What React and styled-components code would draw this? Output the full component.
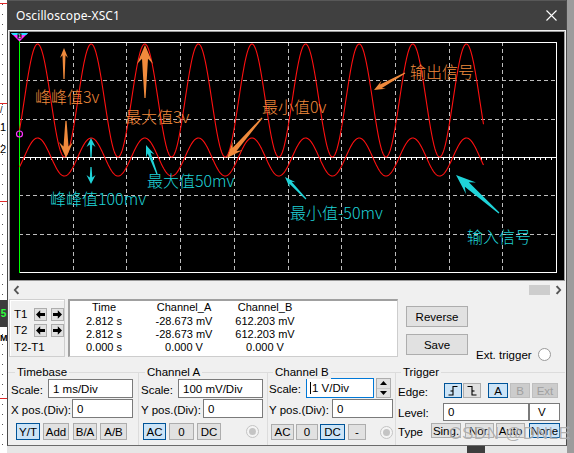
import React from 'react';
import styled, { createGlobalStyle } from 'styled-components';

const GlobalStyle = createGlobalStyle`
  html, body { margin: 0; padding: 0; }
  body {
    width: 574px; height: 453px; overflow: hidden;
    background: #ececec;
    font-family: "Liberation Sans", Arial, sans-serif;
    color: #000;
  }
`;

const ORANGE = '#f08a3c';
const CYAN = '#1fd3d8';

const Desktop = styled.div`
  display: flex;
  width: 574px;
  height: 453px;
  overflow: hidden;
`;

const LeftStrip = styled.div`
  position: relative;
  width: 7px;
  flex: none;
  background:
    repeating-linear-gradient(to bottom, #555 0 1px, transparent 1px 10px) 2px 4px / 1px 100% no-repeat,
    #fff;
  overflow: hidden;
`;

const StripLine = styled.div`
  position: absolute;
  left: 0;
  top: ${p => p.$y}px;
  width: 7px;
  height: 1px;
  background: #e02a2a;
`;

const StripBlock = styled.div`
  position: absolute;
  left: 0;
  top: 300px;
  width: 7px;
  height: 27px;
  background: #3c3c3c;
  color: #2cff3a;
  font-size: 10px;
  line-height: 27px;
  text-align: center;
  font-weight: bold;
`;

const StripChar = styled.span`
  position: absolute;
  left: ${p => p.$x}px;
  top: ${p => p.$y}px;
  font-size: ${p => p.$s || 10}px;
  line-height: 1;
  color: ${p => p.$c || '#000'};
  font-weight: ${p => p.$b ? 'bold' : 'normal'};
`;

const RightStrip = styled.div`
  width: 7px;
  flex: none;
  background: #9c9c9c;
`;

const MidColumn = styled.div`
  width: 560px;
  flex: none;
  display: flex;
  flex-direction: column;
`;

const BelowWindow = styled.div`
  position: relative;
  flex: 1;
  background: #e6e6e6;
`;

const BelowBlock = styled.div`
  position: absolute;
  left: 460px;
  top: 0;
  width: 18px;
  height: 8px;
  background: #3e3e3e;
`;

const Window = styled.div`
  position: relative;
  box-sizing: border-box;
  width: 560px;
  height: 446px;
  display: flex;
  flex-direction: column;
  background: #f0f0f0;
  border-left: 1px solid #4a4a4a;
  border-right: 1px solid #4a4a4a;
  border-bottom: 1px solid #6a6a6a;
`;

const TitleBar = styled.div`
  height: 30px;
  flex: none;
  box-sizing: border-box;
  border-top: 1px solid #585858;
  background: #404040;
  display: flex;
  align-items: center;
  justify-content: space-between;
  padding: 0 9px 0 8px;
  color: #fff;
  font-family: "Noto Sans", "Open Sans", sans-serif;
  font-size: 12px;
`;

const TitleText = styled.span`
  letter-spacing: 0.1px;
`;

const Screen = styled.div`
  margin: 1px 1px 0 1px;
  height: 248px;
  border: 1px solid #9a9a9a;
  background: #000;
  flex: none;
  overflow: hidden;
  svg { display: block; }
`;

const ScrollBar = styled.div`
  height: 17px;
  flex: none;
  display: flex;
  align-items: center;
`;

const ScrollArrow = styled.div`
  width: ${p => p.$w}px;
  height: 17px;
  display: flex;
  align-items: center;
  justify-content: center;
  flex: none;
  color: #505050;
  font-family: "DejaVu Sans", sans-serif;
  font-size: 13px;
  font-weight: bold;
  line-height: 17px;
`;

const ScrollTrack = styled.div`
  flex: 1;
  height: 17px;
  display: flex;
  align-items: center;
  justify-content: flex-end;
`;

const ScrollThumb = styled.div`
  width: 21px;
  height: 10px;
  background: #cdcdcd;
`;

const CursorSection = styled.div`
  display: flex;
  height: 58px;
  margin-top: 1px;
  padding-left: 1px;
  flex: none;
  font-size: 11px;
`;

const CursorBox = styled.div`
  box-sizing: border-box;
  width: 56px;
  height: 58px;
  border: 1px solid #cfcfcf;
  box-shadow: inset 1px 1px 0 #fff;
  padding: 8px 0 0 4px;
  display: flex;
  flex-direction: column;
  gap: 3px;
`;

const CursorRow = styled.div`
  display: flex;
  align-items: center;
  height: 13px;
  line-height: 13px;
`;

const CursorLabel = styled.span`
  width: ${p => p.$w || 20}px;
  flex: none;
  font-size: 11.5px;
  white-space: nowrap;
  padding-top: ${p => p.$dy || 0}px;
`;

const ArrowBtn = styled.div`
  box-sizing: border-box;
  width: 13px;
  height: 13px;
  margin-left: ${p => p.$ml || 0}px;
  border: 1px solid #adadad;
  background: #e1e1e1;
  display: flex;
  align-items: center;
  justify-content: center;
  flex: none;
`;

const Table = styled.div`
  box-sizing: border-box;
  width: 330px;
  height: 58px;
  margin-left: 3px;
  background: #fff;
  border: 1px solid #cdcdcd;
  border-top: 2px solid #a0a0a0;
  border-left: 2px solid #a0a0a0;
  display: grid;
  grid-template-columns: 68px 92px 70px;
  grid-auto-rows: 13px;
  align-content: start;
  line-height: 13px;
`;

const Cell = styled.div`
  text-align: center;
  white-space: nowrap;
  padding-top: ${p => p.$head ? 0 : 1}px;
`;

const SideButtons = styled.div`
  display: flex;
  flex-direction: column;
  gap: 7px;
  padding-top: 7px;
  margin-left: 8px;
`;

const PushButton = styled.div`
  box-sizing: border-box;
  width: 62px;
  height: 21px;
  border: 1px solid #adadad;
  background: #e1e1e1;
  display: flex;
  align-items: center;
  justify-content: center;
  font-size: 11.5px;
`;

const ExtRow = styled.div`
  display: flex;
  align-items: center;
  height: 13px;
  margin-top: 49px;
  margin-left: 8px;
  font-size: 11.5px;
  white-space: nowrap;
  gap: 6px;
`;

const Controls = styled.div`
  display: flex;
  margin-top: 15px;
  flex: 1;
  font-size: 11px;
`;

const Group = styled.div`
  position: relative;
  box-sizing: border-box;
  width: ${p => p.$w}px;
  flex: none;
  border-top: 1px solid #dcdcdc;
  border-left: ${p => p.$first ? 'none' : '1px solid #dcdcdc'};
  padding-left: ${p => p.$pl}px;
`;

const Legend = styled.span`
  position: absolute;
  top: -8px;
  left: ${p => p.$x}px;
  padding: 0 2px;
  background: #f0f0f0;
  font-size: 11.5px;
  line-height: 14px;
  white-space: nowrap;
`;

const Row = styled.div`
  display: flex;
  align-items: center;
  height: ${p => p.$h}px;
  margin-top: ${p => p.$mt}px;
`;

const Label = styled.span`
  width: ${p => p.$w}px;
  flex: none;
  white-space: nowrap;
  font-size: 11.5px;
  padding-top: 2px;
`;

const Input = styled.div`
  box-sizing: border-box;
  width: ${p => p.$w}px;
  height: 100%;
  flex: none;
  border: 1px solid ${p => p.$focus ? '#0078d7' : '#7a7a7a'};
  background: #fff;
  padding-left: ${p => p.$pl ?? 4}px;
  display: flex;
  align-items: center;
  font-size: 11.5px;
  white-space: nowrap;
`;

const Caret = styled.span`
  display: inline-block;
  width: 1px;
  height: 12px;
  background: #000;
  margin-right: 1px;
`;

const Btn = styled.div`
  box-sizing: border-box;
  width: ${p => p.$w}px;
  height: 100%;
  margin-left: ${p => p.$ml || 0}px;
  flex: none;
  display: flex;
  align-items: center;
  justify-content: center;
  font-size: 11.5px;
  border: 1px solid ${p => p.$active ? '#005499' : p.$disabled ? '#bfbfbf' : '#adadad'};
  background: ${p => p.$active ? '#cce4f7' : p.$disabled ? '#cccccc' : '#e1e1e1'};
  color: ${p => p.$disabled ? '#a0a0a0' : '#000'};
`;

const Spinner = styled.div`
  box-sizing: border-box;
  width: 15px;
  height: 20px;
  margin-left: 2px;
  flex: none;
  border: 1px solid #adadad;
  background: #e1e1e1;
  display: flex;
  flex-direction: column;
`;

const SpinHalf = styled.div`
  flex: 1;
  display: flex;
  align-items: center;
  justify-content: center;
  border-top: ${p => p.$bottom ? '1px solid #c8c8c8' : 'none'};
`;

const Radio = styled.div`
  box-sizing: border-box;
  width: 13px;
  height: 13px;
  margin-left: ${p => p.$ml || 0}px;
  flex: none;
  border-radius: 50%;
  border: 1px solid ${p => p.$disabled ? '#c4c4c4' : '#9a9a9a'};
  background: ${p => p.$disabled ? '#f4f4f4' : '#fff'};
  display: flex;
  align-items: center;
  justify-content: center;
  &::after {
    content: '';
    width: 7px;
    height: 7px;
    border-radius: 50%;
    background: ${p => p.$dot ? '#c4c4c4' : 'transparent'};
  }
`;

const Watermark = styled.div`
  position: absolute;
  left: 441px;
  top: 424px;
  font-size: 17px;
  letter-spacing: 0.6px;
  color: rgba(105, 105, 105, 0.5);
  text-shadow: 0 0 1px rgba(255, 255, 255, 0.9);
  white-space: nowrap;
  pointer-events: none;
`;

/* ---------- chart drawing ---------- */
const GX0 = 19, GX1 = 556, GY0 = 42, GY1 = 272;
const DX = (GX1 - GX0) / 10;
const DY = (GY1 - GY0) / 6;

function wavePath(amp, center) {
  const period = 53.6, peak = 37.6;
  let d = '';
  for (let x = 19.5; x <= 483.6; x += 0.5) {
    const y = center - amp * Math.cos((2 * Math.PI * (x - peak)) / period);
    d += (d ? 'L' : 'M') + x.toFixed(2) + ' ' + y.toFixed(2);
  }
  return d;
}

function arrowPts(x1, y1, x2, y2, headW, headL, shaft, tail = 0.6) {
  const dx = x2 - x1, dy = y2 - y1, L = Math.hypot(dx, dy);
  const ux = dx / L, uy = dy / L, nx = -uy, ny = ux;
  const bx = x2 - ux * headL, by = y2 - uy * headL;
  const jx = bx + ux * headL * 0.28, jy = by + uy * headL * 0.28;
  const p = (x, y) => `${x.toFixed(1)},${y.toFixed(1)}`;
  return [
    p(x1 + nx * tail, y1 + ny * tail),
    p(jx + nx * shaft / 2, jy + ny * shaft / 2),
    p(bx + nx * headW / 2, by + ny * headW / 2),
    p(x2, y2),
    p(bx - nx * headW / 2, by - ny * headW / 2),
    p(jx - nx * shaft / 2, jy - ny * shaft / 2),
    p(x1 - nx * tail, y1 - ny * tail),
  ].join(' ');
}

const arrows = [
  { c: ORANGE, a: [64, 79, 64, 48, 8, 10, 3] },
  { c: ORANGE, a: [66, 121, 66, 158, 14, 16, 5] },
  { c: ORANGE, a: [145, 98, 145, 45, 16, 19, 6] },
  { c: ORANGE, a: [262, 118, 227, 158, 13, 16, 5] },
  { c: ORANGE, a: [405, 73, 374, 90, 9, 11, 4] },
  { c: CYAN, a: [91, 157, 91, 138, 9, 9, 2.5] },
  { c: CYAN, a: [91, 167, 91, 184, 9, 9, 2.5] },
  { c: CYAN, a: [157, 174, 146, 145, 9, 12, 3] },
  { c: CYAN, a: [306, 199, 285, 177, 8, 11, 3] },
  { c: CYAN, a: [499, 213, 456, 175, 15, 20, 6] },
];

const notes = [
  { c: ORANGE, x: 35, y: 103, t: '峰峰值3v' },
  { c: ORANGE, x: 125, y: 123, t: '最大值3v' },
  { c: ORANGE, x: 262, y: 113, t: '最小值0v' },
  { c: ORANGE, x: 410, y: 78, t: '输出信号' },
  { c: CYAN, x: 50, y: 205, t: '峰峰值100mv' },
  { c: CYAN, x: 147, y: 187, t: '最大值50mv' },
  { c: CYAN, x: 290, y: 219, t: '最小值-50mv' },
  { c: CYAN, x: 467, y: 243, t: '输入信号' },
];

function ScopeChart() {
  const vx = [];
  for (let k = 1; k < 10; k++) vx.push(Math.round(GX0 + DX * k) + 0.5);
  const hy = [];
  for (let k = 1; k < 6; k++) if (k !== 3) hy.push(Math.round(GY0 + DY * k) + 0.5);
  const ticks = [];
  for (let k = 1; k < 100; k++) {
    const x = Math.round(GX0 + (DX / 10) * k) + 0.5;
    ticks.push(x);
  }
  const cy = 157.5;
  return (
    <svg width="554" height="248" viewBox="10 32 554 248">
      <g stroke="#bdbdbd" strokeWidth="1" strokeDasharray="4 3" shapeRendering="crispEdges">
        {vx.map(x => <line key={'v' + x} x1={x} y1={GY0} x2={x} y2={GY1} />)}
        {hy.map(y => <line key={'h' + y} x1={GX0} y1={y} x2={GX1} y2={y} />)}
      </g>
      <g stroke="#fff" strokeWidth="1" shapeRendering="crispEdges" fill="none">
        <line x1={GX0} y1={42.5} x2={GX1 + 0.5} y2={42.5} />
        <line x1={GX1 + 0.5} y1={42.5} x2={GX1 + 0.5} y2={GY1 + 0.5} />
        <line x1={GX0} y1={GY1 + 0.5} x2={GX1 + 0.5} y2={GY1 + 0.5} />
        <line x1={GX0} y1={cy} x2={GX1} y2={cy} strokeWidth="1.4" />
        {ticks.map(x => <line key={'t' + x} x1={x} y1={cy} x2={x} y2={cy + 2.5} />)}
      </g>
      <line x1="19.5" y1="36" x2="19.5" y2={GY1 + 0.5} stroke="#00ff00" strokeWidth="1" shapeRendering="crispEdges" />
      <g fill="none" stroke="#ff1010" strokeWidth="1.1">
        <path d={wavePath(56.5, 100.5)} />
        <path d={wavePath(19, 157)} />
      </g>
      <circle cx="19.5" cy="134" r="3" fill="none" stroke="#ff33ff" strokeWidth="1.2" />
      <polygon points="11,33 28,33 19.5,41.5" fill="#ff33ff" />
      <polygon points="11,33 28,33 26.2,35 12.8,35" fill="#22e0ff" />
      <rect x="17.5" y="33.5" width="4" height="5" fill="#111" />
      <text x="19.5" y="38.3" fontSize="5" fill="#fff" textAnchor="middle" fontFamily="DejaVu Sans, sans-serif">1</text>
      {arrows.map((ar, i) => (
        <polygon key={'a' + i} points={arrowPts(...ar.a)} fill={ar.c} />
      ))}
      {notes.map((n, i) => (
        <text key={'n' + i} x={n.x} y={n.y} fill={n.c} fontSize="16" fontWeight="300"
          fontFamily='"Noto Sans CJK SC", "Noto Sans", sans-serif'>{n.t}</text>
      ))}
    </svg>
  );
}

/* ---------- small icons ---------- */
const Chevron = ({ left }) => (
  <svg width="7" height="10" viewBox="0 0 7 10" style={{ display: 'block', flex: 'none' }}>
    <polygon
      points={left ? '4.6,0.5 6.2,1.8 3,5 6.2,8.2 4.6,9.5 0.6,5' : '2.4,0.5 0.8,1.8 4,5 0.8,8.2 2.4,9.5 6.4,5'}
      fill="#555" />
  </svg>
);

const CursorArrow = ({ dir }) => (
  <svg width="9" height="9" viewBox="0 0 9 9">
    <path d={dir === 'left'
      ? 'M0 4.5 L4.2 0.3 V3 H9 V6 H4.2 V8.7 Z'
      : 'M9 4.5 L4.8 0.3 V3 H0 V6 H4.8 V8.7 Z'} fill="#000" />
  </svg>
);

const CloseIcon = () => (
  <svg width="11" height="11" viewBox="0 0 11 11">
    <path d="M0.5 0.5 L10.5 10.5 M10.5 0.5 L0.5 10.5" stroke="#fff" strokeWidth="1.1" />
  </svg>
);

const SpinArrow = ({ up }) => (
  <svg width="7" height="4" viewBox="0 0 7 4">
    <path d={up ? 'M0 4 L3.5 0 L7 4 Z' : 'M0 0 L3.5 4 L7 0 Z'} fill="#000" />
  </svg>
);

const EdgeIcon = ({ rising }) => (
  <svg width="12" height="11" viewBox="0 0 12 11">
    <path d={rising ? 'M1.5 10 H6 V1.5 H10.5' : 'M1.5 1.5 H6 V10 H10.5'}
      fill="none" stroke="#000" strokeWidth="1.1" />
    <path d={rising ? 'M3.5 6 H6' : 'M6 6 H8.5'} fill="none" stroke="#000" strokeWidth="1.1" />
  </svg>
);

export default function App() {
  return (
    <>
      <GlobalStyle />
      <Desktop>
        <LeftStrip>
          <StripLine $y={3} />
          <StripLine $y={103} />
          <StripLine $y={201} />
          <StripLine $y={398} />
          <StripChar $x={0} $y={106} $s={9}>/</StripChar>
          <StripChar $x={0} $y={122} $s={11}>1</StripChar>
          <StripChar $x={0} $y={144} $s={11}>2</StripChar>
          <StripBlock>5</StripBlock>
          <StripChar $x={0} $y={334} $s={9} $b>M</StripChar>
        </LeftStrip>
        <MidColumn>
          <Window>
            <TitleBar>
              <TitleText>Oscilloscope-XSC1</TitleText>
              <CloseIcon />
            </TitleBar>
            <Screen>
              <ScopeChart />
            </Screen>
            <ScrollBar>
              <ScrollArrow $w={17}><Chevron left /></ScrollArrow>
              <ScrollTrack><ScrollThumb /></ScrollTrack>
              <ScrollArrow $w={16}><Chevron /></ScrollArrow>
            </ScrollBar>
            <CursorSection>
              <CursorBox>
                <CursorRow>
                  <CursorLabel>T1</CursorLabel>
                  <ArrowBtn><CursorArrow dir="left" /></ArrowBtn>
                  <ArrowBtn $ml={4}><CursorArrow dir="right" /></ArrowBtn>
                </CursorRow>
                <CursorRow>
                  <CursorLabel $dy={-3}>T2</CursorLabel>
                  <ArrowBtn><CursorArrow dir="left" /></ArrowBtn>
                  <ArrowBtn $ml={4}><CursorArrow dir="right" /></ArrowBtn>
                </CursorRow>
                <CursorRow>
                  <CursorLabel $w={40} $dy={1}>T2-T1</CursorLabel>
                </CursorRow>
              </CursorBox>
              <Table>
                <Cell $head>Time</Cell>
                <Cell $head>Channel_A</Cell>
                <Cell $head>Channel_B</Cell>
                <Cell>2.812 s</Cell>
                <Cell>-28.673 mV</Cell>
                <Cell>612.203 mV</Cell>
                <Cell>2.812 s</Cell>
                <Cell>-28.673 mV</Cell>
                <Cell>612.203 mV</Cell>
                <Cell>0.000 s</Cell>
                <Cell>0.000 V</Cell>
                <Cell>0.000 V</Cell>
              </Table>
              <SideButtons>
                <PushButton>Reverse</PushButton>
                <PushButton>Save</PushButton>
              </SideButtons>
              <ExtRow>
                <span>Ext. trigger</span>
                <Radio />
              </ExtRow>
            </CursorSection>
            <Controls>
              <Group $w={130} $pl={3} $first>
                <Legend $x={7}>Timebase</Legend>
                <Row $h={19} $mt={6}>
                  <Label $w={37}>Scale:</Label>
                  <Input $w={85}>1 ms/Div</Input>
                </Row>
                <Row $h={19} $mt={1}>
                  <Label $w={61}>X pos.(Div):</Label>
                  <Input $w={61}>0</Input>
                </Row>
                <Row $h={17} $mt={5}>
                  <Btn $w={24} $ml={5} $active>Y/T</Btn>
                  <Btn $w={26} $ml={3}>Add</Btn>
                  <Btn $w={24} $ml={4}>B/A</Btn>
                  <Btn $w={27} $ml={3}>A/B</Btn>
                </Row>
              </Group>
              <Group $w={129} $pl={2}>
                <Legend $x={6}>Channel A</Legend>
                <Row $h={19} $mt={6}>
                  <Label $w={37}>Scale:</Label>
                  <Input $w={85}>100 mV/Div</Input>
                </Row>
                <Row $h={19} $mt={1}>
                  <Label $w={62}>Y pos.(Div):</Label>
                  <Input $w={60}>0</Input>
                </Row>
                <Row $h={17} $mt={5}>
                  <Btn $w={23} $ml={2} $active>AC</Btn>
                  <Btn $w={25} $ml={3}>0</Btn>
                  <Btn $w={24} $ml={3}>DC</Btn>
                  <Radio $ml={25} $disabled $dot />
                </Row>
              </Group>
              <Group $w={128} $pl={1}>
                <Legend $x={5}>Channel B</Legend>
                <Row $h={20} $mt={5}>
                  <Label $w={37}>Scale:</Label>
                  <Input $w={68} $focus $pl={3}><Caret />1 V/Div</Input>
                  <Spinner>
                    <SpinHalf><SpinArrow up /></SpinHalf>
                    <SpinHalf $bottom><SpinArrow /></SpinHalf>
                  </Spinner>
                </Row>
                <Row $h={19} $mt={1}>
                  <Label $w={63}>Y pos.(Div):</Label>
                  <Input $w={61}>0</Input>
                </Row>
                <Row $h={16} $mt={6}>
                  <Btn $w={23} $ml={2}>AC</Btn>
                  <Btn $w={22} $ml={2}>0</Btn>
                  <Btn $w={25} $ml={2} $active>DC</Btn>
                  <Btn $w={18} $ml={3}>-</Btn>
                  <Radio $ml={14} $disabled $dot />
                </Row>
              </Group>
              <Group $w={170} $pl={2}>
                <Legend $x={5}>Trigger</Legend>
                <Row $h={15} $mt={10}>
                  <Label $w={46}>Edge:</Label>
                  <Btn $w={18} $active><EdgeIcon rising /></Btn>
                  <Btn $w={18} $ml={1}><EdgeIcon /></Btn>
                  <Btn $w={20} $ml={7} $active>A</Btn>
                  <Btn $w={20} $ml={2} $disabled>B</Btn>
                  <Btn $w={26} $ml={2} $disabled>Ext</Btn>
                </Row>
                <Row $h={18} $mt={5}>
                  <Label $w={45}>Level:</Label>
                  <Input $w={86}>0</Input>
                  <Input $w={31} $pl={8}>V</Input>
                </Row>
                <Row $h={15} $mt={2}>
                  <Label $w={33}>Type</Label>
                  <Btn $w={30}>Sing.</Btn>
                  <Btn $w={29} $ml={4}>Nor.</Btn>
                  <Btn $w={29} $ml={2}>Auto</Btn>
                  <Btn $w={31} $ml={4} $active>None</Btn>
                </Row>
              </Group>
            </Controls>
            <Watermark>CSDN @DNLE</Watermark>
          </Window>
          <BelowWindow><BelowBlock /></BelowWindow>
        </MidColumn>
        <RightStrip />
      </Desktop>
    </>
  );
}
